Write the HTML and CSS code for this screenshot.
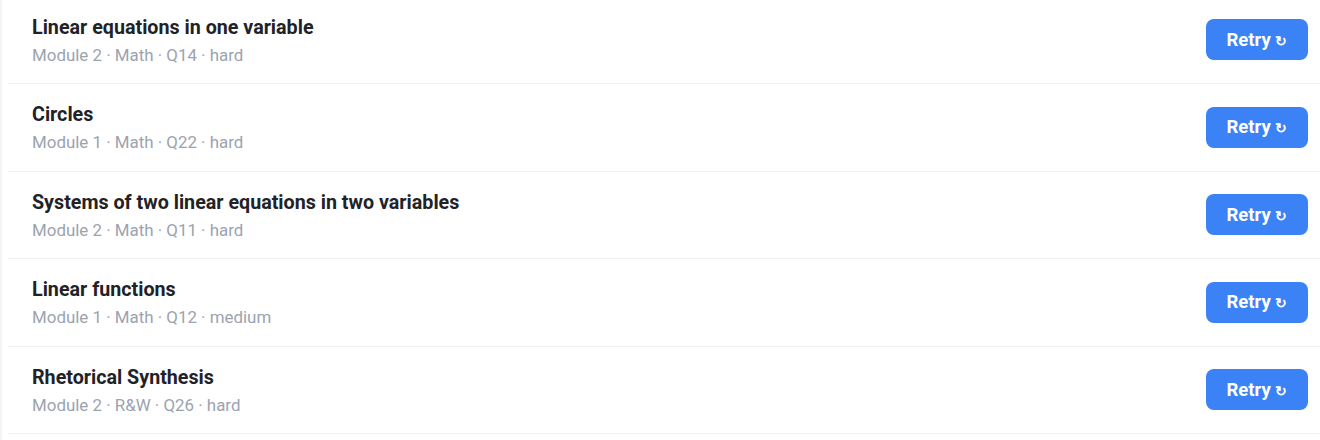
FILE: index.html
```html
<!DOCTYPE html>
<html lang="en">
<head>
    <meta charset="UTF-8">
    <title>Mistakes</title>
    <link rel="stylesheet" href="styles.css">
</head>
<body>
    <div class="panel">
        <ul class="list">
            <li class="row">
                <div class="info">
                    <div class="title">Linear equations in one variable</div>
                    <div class="meta">Module 2 · Math · Q14 · hard</div>
                </div>
                <button class="retry">Retry <span class="ico">↻</span></button>
            </li>
            <li class="row">
                <div class="info">
                    <div class="title">Circles</div>
                    <div class="meta">Module 1 · Math · Q22 · hard</div>
                </div>
                <button class="retry">Retry <span class="ico">↻</span></button>
            </li>
            <li class="row">
                <div class="info">
                    <div class="title">Systems of two linear equations in two variables</div>
                    <div class="meta">Module 2 · Math · Q11 · hard</div>
                </div>
                <button class="retry">Retry <span class="ico">↻</span></button>
            </li>
            <li class="row">
                <div class="info">
                    <div class="title">Linear functions</div>
                    <div class="meta">Module 1 · Math · Q12 · medium</div>
                </div>
                <button class="retry">Retry <span class="ico">↻</span></button>
            </li>
            <li class="row">
                <div class="info">
                    <div class="title">Rhetorical Synthesis</div>
                    <div class="meta">Module 2 · R&amp;W · Q26 · hard</div>
                </div>
                <button class="retry">Retry <span class="ico">↻</span></button>
            </li>
        </ul>
    </div>
</body>
</html>
```

FILE: styles.css
```css
/* page */
body{
    margin: 0;
    background: #f3f4f6;
    font-family: Roboto, "Liberation Sans", sans-serif;
}
.panel{
    margin-left: 2px;
    padding-left: 6px;
    background: #fff;
    height: 100vh;
    overflow: hidden;
}
.list{
    list-style: none;
    margin: -3.5px 0 0 0;
    padding: 0;
}

/* one mistake */
.row{
    display: flex;
    align-items: center;
    justify-content: space-between;
    height: 86.5px;
    padding: 0 12px 0 24px;
    border-bottom: 1px solid #f0f1f3;
}
.info{
    padding-top: 2px;
}
.title{
    font-size: 19.7px;
    font-weight: 700;
    color: #1f2328;
    line-height: 24px;
}
.meta{
    margin-top: 4px;
    font-size: 16.9px;
    color: #9ca3af;
    line-height: 22px;
}

.retry{
    width: 102px;
    height: 41px;
    border: 0;
    border-radius: 8px;
    background: #3b82f6;
    color: #fff;
    font-family: inherit;
    font-size: 18.5px;
    font-weight: 700;
    cursor: pointer;
}
.retry .ico{
    font-size: 14px;
}
```
